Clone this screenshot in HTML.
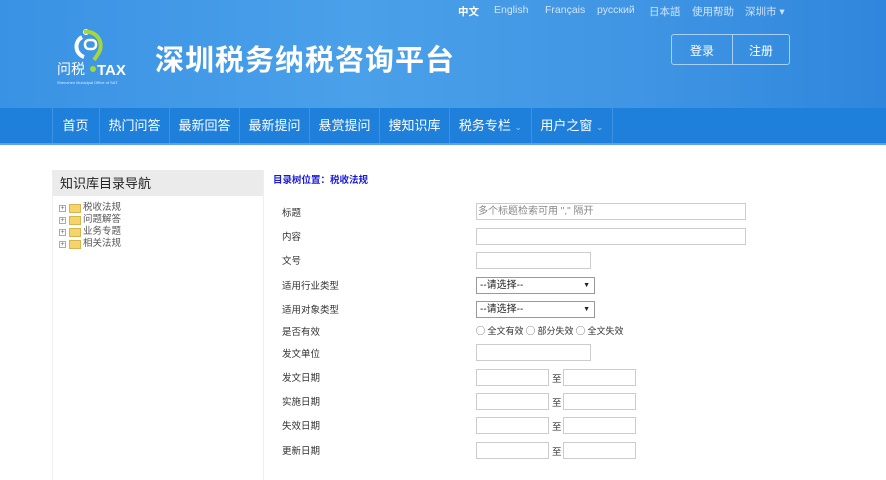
<!DOCTYPE html>
<html><head><meta charset="utf-8"><style>
*{margin:0;padding:0;box-sizing:border-box}
body{width:886px;height:477px;overflow:hidden;background:#fff;font-family:"Liberation Sans","Noto Sans CJK SC",sans-serif;position:relative}
.banner{position:absolute;left:0;top:0;width:886px;height:108px;background:linear-gradient(90deg,#3a92e4 0%,#4aa0e9 40%,#4196e4 70%,#2f86dc 100%)}
.top{position:absolute;top:4px;font-size:10.5px;color:#cfe4fb}
.nav{position:absolute;left:0;top:108px;width:886px;height:37px;background:#1f80dc;border-bottom:2px solid #5aa3e8}
.nav span{position:absolute;top:0;height:35px;line-height:36px;color:#fff;font-size:13px;text-align:center;border-left:1px solid #3d93e3}
.title{position:absolute;left:155px;top:37px;color:#fff;font-size:29px;font-weight:bold;letter-spacing:1px}
.btn{position:absolute;left:671px;top:34px;width:119px;height:31px;border:1px solid #a8d0f6;border-radius:3px;color:#fff;font-size:12px}
.btn span{position:absolute;top:7px}
.panel{position:absolute;left:52px;top:170px;width:212px;height:310px;border-left:1px solid #eee;border-right:1px solid #eee}
.panel .h{height:26px;background:#ebebeb;font-size:13px;line-height:28px;padding-left:7px;color:#222}
.tree{font-size:9.5px;color:#555;line-height:12px;margin-top:6px;padding-left:6px}
.tree div{height:12px;display:flex;align-items:center}
.pl{width:7px;height:7px;border:1px solid #aaa;margin-right:3px;font-size:7px;line-height:5px;text-align:center;color:#666}
.fd{width:12px;height:9px;background:#f5d56b;border:1px solid #d9b44a;margin-right:2px}
.loc{position:absolute;left:273px;top:172px;font-size:9.5px;color:#1a1ad8;font-weight:bold}
.lb{position:absolute;left:282px;font-size:9.5px;color:#333}
.in{position:absolute;border:1px solid #ccc;height:17px;background:#fff}
.sel{position:absolute;border:1px solid #999;height:17px;width:119px;left:476px;font-size:10px;line-height:15px;padding-left:3px;color:#222}
.sel:after{content:"▼";position:absolute;right:4px;font-size:7px}
.zhi{position:absolute;left:552px;font-size:9.5px;color:#333}
</style></head><body>
<div class="banner"></div>
<div class="top" style="left:458px;color:#fff;font-weight:bold">中文</div>
<div class="top" style="left:494px">English</div>
<div class="top" style="left:545px">Français</div>
<div class="top" style="left:597px">русский</div>
<div class="top" style="left:649px">日本語</div>
<div class="top" style="left:692px">使用帮助</div>
<div class="top" style="left:745px">深圳市 ▾</div>
<svg style="position:absolute;left:54px;top:24px" width="80" height="65" viewBox="0 0 80 65">
<circle cx="32" cy="8" r="3" fill="#fff"/>
<path d="M28 13 A11 11 0 0 0 30 33" stroke="#fff" stroke-width="4" fill="none"/>
<path d="M30 8 A14 14 0 0 1 44 30 L40 36" stroke="#a5d63a" stroke-width="4" fill="none"/>
<rect x="31" y="16" width="11" height="9" rx="4" stroke="#fff" stroke-width="2.5" fill="none"/>
<circle cx="39" cy="45" r="3" fill="#a5d63a"/>
<text x="3" y="50" font-size="14" fill="#fff" font-family="Noto Sans CJK SC">问税</text>
<text x="43" y="51" font-size="15" font-weight="bold" fill="#fff" font-family="Liberation Sans">TAX</text>
<text x="3" y="60" font-size="4" fill="#dbeafb">Shenzhen Municipal Office of SAT</text>
</svg>
<div class="title">深圳税务纳税咨询平台</div>
<div class="btn"><span style="left:18px">登录</span><span style="left:77px">注册</span><div style="position:absolute;left:60px;top:0;width:1px;height:29px;background:#a8d0f6"></div></div>
<div class="nav">
<span style="left:52px;width:46px">首页</span>
<span style="left:99px;width:70px">热门问答</span>
<span style="left:169px;width:70px">最新回答</span>
<span style="left:239px;width:70px">最新提问</span>
<span style="left:309px;width:70px">悬赏提问</span>
<span style="left:379px;width:70px">搜知识库</span>
<span style="left:449px;width:82px">税务专栏 <small style="font-size:9px;color:#9cc8f2">⌄</small></span>
<span style="left:531px;width:82px;border-right:1px solid #3d93e3">用户之窗 <small style="font-size:9px;color:#9cc8f2">⌄</small></span>
</div>
<div class="panel"><div class="h">知识库目录导航</div>
<div class="tree"><div><span class="pl">+</span><span class="fd"></span>税收法规</div><div><span class="pl">+</span><span class="fd"></span>问题解答</div><div><span class="pl">+</span><span class="fd"></span>业务专题</div><div><span class="pl">+</span><span class="fd"></span>相关法规</div></div></div>
<div class="loc">目录树位置：税收法规</div>
<div class="lb" style="top:205px">标题</div><div class="in" style="left:476px;top:203px;width:270px;font-size:10px;color:#888;line-height:15px;padding-left:1px">多个标题检索可用 "," 隔开</div>
<div class="lb" style="top:229px">内容</div><div class="in" style="left:476px;top:228px;width:270px"></div>
<div class="lb" style="top:253px">文号</div><div class="in" style="left:476px;top:252px;width:115px"></div>
<div class="lb" style="top:278px">适用行业类型</div><div class="sel" style="top:277px">--请选择--</div>
<div class="lb" style="top:302px">适用对象类型</div><div class="sel" style="top:301px">--请选择--</div>
<div class="lb" style="top:324px">是否有效</div>
<div style="position:absolute;left:476px;top:324px;font-size:9px;color:#333">◯ 全文有效 ◯ 部分失效 ◯ 全文失效</div>
<div class="lb" style="top:346px">发文单位</div><div class="in" style="left:476px;top:344px;width:115px"></div>
<div class="lb" style="top:370px">发文日期</div><div class="in" style="left:476px;top:369px;width:73px"></div><div class="zhi" style="top:371px">至</div><div class="in" style="left:563px;top:369px;width:73px"></div>
<div class="lb" style="top:394px">实施日期</div><div class="in" style="left:476px;top:393px;width:73px"></div><div class="zhi" style="top:395px">至</div><div class="in" style="left:563px;top:393px;width:73px"></div>
<div class="lb" style="top:418px">失效日期</div><div class="in" style="left:476px;top:417px;width:73px"></div><div class="zhi" style="top:419px">至</div><div class="in" style="left:563px;top:417px;width:73px"></div>
<div class="lb" style="top:443px">更新日期</div><div class="in" style="left:476px;top:442px;width:73px"></div><div class="zhi" style="top:444px">至</div><div class="in" style="left:563px;top:442px;width:73px"></div>
</body></html>
